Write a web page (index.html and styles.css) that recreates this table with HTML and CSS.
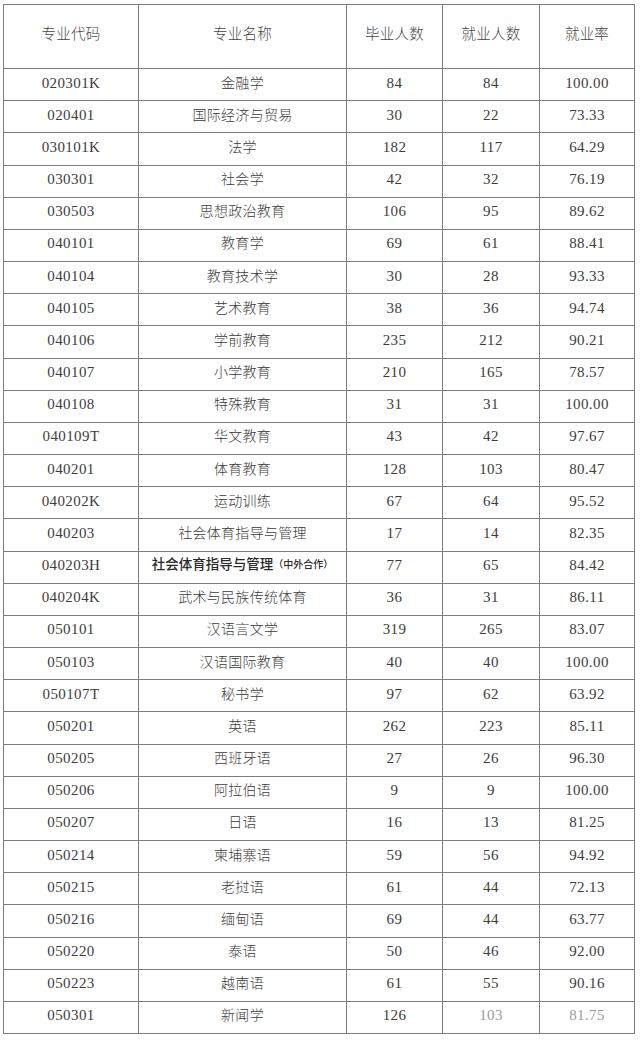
FILE: index.html
```html
<!DOCTYPE html>
<html lang="zh-CN">
<head>
<meta charset="utf-8">
<title>专业就业率</title>
<link rel="stylesheet" href="styles.css">
</head>
<body>
<div class="sheet">
  <div class="cell head">专业代码</div><div class="cell head">专业名称</div><div class="cell head">毕业人数</div><div class="cell head">就业人数</div><div class="cell head">就业率</div>
  <div class="cell">020301K</div><div class="cell name">金融学</div><div class="cell">84</div><div class="cell">84</div><div class="cell">100.00</div>
  <div class="cell">020401</div><div class="cell name">国际经济与贸易</div><div class="cell">30</div><div class="cell">22</div><div class="cell">73.33</div>
  <div class="cell">030101K</div><div class="cell name">法学</div><div class="cell">182</div><div class="cell">117</div><div class="cell">64.29</div>
  <div class="cell">030301</div><div class="cell name">社会学</div><div class="cell">42</div><div class="cell">32</div><div class="cell">76.19</div>
  <div class="cell">030503</div><div class="cell name">思想政治教育</div><div class="cell">106</div><div class="cell">95</div><div class="cell">89.62</div>
  <div class="cell">040101</div><div class="cell name">教育学</div><div class="cell">69</div><div class="cell">61</div><div class="cell">88.41</div>
  <div class="cell">040104</div><div class="cell name">教育技术学</div><div class="cell">30</div><div class="cell">28</div><div class="cell">93.33</div>
  <div class="cell">040105</div><div class="cell name">艺术教育</div><div class="cell">38</div><div class="cell">36</div><div class="cell">94.74</div>
  <div class="cell">040106</div><div class="cell name">学前教育</div><div class="cell">235</div><div class="cell">212</div><div class="cell">90.21</div>
  <div class="cell">040107</div><div class="cell name">小学教育</div><div class="cell">210</div><div class="cell">165</div><div class="cell">78.57</div>
  <div class="cell">040108</div><div class="cell name">特殊教育</div><div class="cell">31</div><div class="cell">31</div><div class="cell">100.00</div>
  <div class="cell">040109T</div><div class="cell name">华文教育</div><div class="cell">43</div><div class="cell">42</div><div class="cell">97.67</div>
  <div class="cell">040201</div><div class="cell name">体育教育</div><div class="cell">128</div><div class="cell">103</div><div class="cell">80.47</div>
  <div class="cell">040202K</div><div class="cell name">运动训练</div><div class="cell">67</div><div class="cell">64</div><div class="cell">95.52</div>
  <div class="cell">040203</div><div class="cell name">社会体育指导与管理</div><div class="cell">17</div><div class="cell">14</div><div class="cell">82.35</div>
  <div class="cell">040203H</div><div class="cell name strong">社会体育指导与管理<span class="note">（中外合作）</span></div><div class="cell">77</div><div class="cell">65</div><div class="cell">84.42</div>
  <div class="cell">040204K</div><div class="cell name">武术与民族传统体育</div><div class="cell">36</div><div class="cell">31</div><div class="cell">86.11</div>
  <div class="cell">050101</div><div class="cell name">汉语言文学</div><div class="cell">319</div><div class="cell">265</div><div class="cell">83.07</div>
  <div class="cell">050103</div><div class="cell name">汉语国际教育</div><div class="cell">40</div><div class="cell">40</div><div class="cell">100.00</div>
  <div class="cell">050107T</div><div class="cell name">秘书学</div><div class="cell">97</div><div class="cell">62</div><div class="cell">63.92</div>
  <div class="cell">050201</div><div class="cell name">英语</div><div class="cell">262</div><div class="cell">223</div><div class="cell">85.11</div>
  <div class="cell">050205</div><div class="cell name">西班牙语</div><div class="cell">27</div><div class="cell">26</div><div class="cell">96.30</div>
  <div class="cell">050206</div><div class="cell name">阿拉伯语</div><div class="cell">9</div><div class="cell">9</div><div class="cell">100.00</div>
  <div class="cell">050207</div><div class="cell name">日语</div><div class="cell">16</div><div class="cell">13</div><div class="cell">81.25</div>
  <div class="cell">050214</div><div class="cell name">柬埔寨语</div><div class="cell">59</div><div class="cell">56</div><div class="cell">94.92</div>
  <div class="cell">050215</div><div class="cell name">老挝语</div><div class="cell">61</div><div class="cell">44</div><div class="cell">72.13</div>
  <div class="cell">050216</div><div class="cell name">缅甸语</div><div class="cell">69</div><div class="cell">44</div><div class="cell">63.77</div>
  <div class="cell">050220</div><div class="cell name">泰语</div><div class="cell">50</div><div class="cell">46</div><div class="cell">92.00</div>
  <div class="cell">050223</div><div class="cell name">越南语</div><div class="cell">61</div><div class="cell">55</div><div class="cell">90.16</div>
  <div class="cell">050301</div><div class="cell name">新闻学</div><div class="cell">126</div><div class="cell faded">103</div><div class="cell faded">81.75</div>
</div>
</body>
</html>
```

FILE: styles.css
```css
html, body {
  margin: 0;
  padding: 0;
  background: #ffffff;
}

body {
  width: 640px;
  height: 1040px;
  overflow: hidden;
}

.sheet {
  margin: 4px 0 0 3px;
  width: 632px;
  height: 1030px;
  box-sizing: border-box;
  border-left: 1px solid #7d7d7d;
  border-top: 1px solid #7d7d7d;
  display: grid;
  grid-template-columns: 135px 208px 96px 97px 95px;
  grid-template-rows: 64px repeat(30, 1fr);
  font-family: "Liberation Serif", "Noto Sans CJK SC", serif;
  color: #3c3c3c;
}

.cell {
  border-right: 1px solid #7d7d7d;
  border-bottom: 1px solid #7d7d7d;
  display: flex;
  align-items: center;
  justify-content: center;
  font-size: 15px;
  line-height: 1;
  padding-bottom: 3px;
  box-sizing: border-box;
  white-space: nowrap;
  letter-spacing: 0.4px;
}

.head {
  font-family: "Noto Sans CJK SC", sans-serif;
  font-size: 14.5px;
  font-weight: 300;
  color: #444444;
  letter-spacing: 0.2px;
  padding-bottom: 7px;
}

.name {
  font-family: "Noto Sans CJK SC", sans-serif;
  font-size: 14px;
  font-weight: 300;
  color: #3a3a3a;
  letter-spacing: 0.3px;
  padding-bottom: 6px;
}

.strong {
  font-weight: 500;
  font-size: 13.5px;
  letter-spacing: 0;
  color: #2a2a2a;
}

.note {
  font-size: 10px;
  font-weight: 500;
}

.faded {
  color: #9a9a9a;
}
```
